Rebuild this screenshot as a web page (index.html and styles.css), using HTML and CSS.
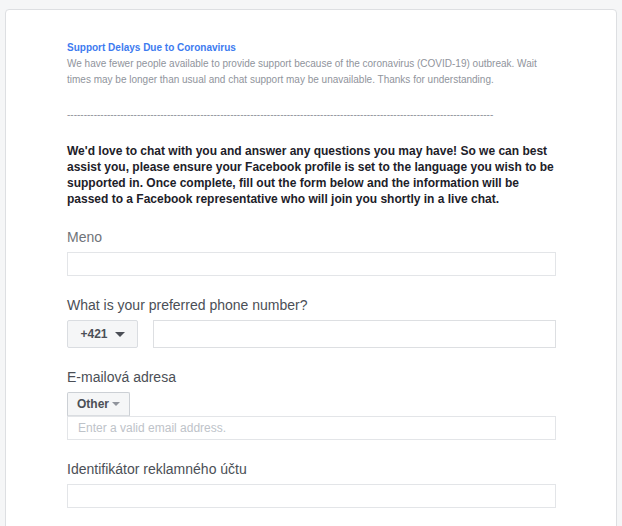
FILE: index.html
```html
<!DOCTYPE html>
<html lang="en">
<head>
<meta charset="utf-8">
<title>Support</title>
<link rel="stylesheet" href="styles.css">
</head>
<body>
<div class="card">
  <div class="notice">
    <div class="notice-title">Support Delays Due to Coronavirus</div>
    <div class="notice-text">We have fewer people available to provide support because of the coronavirus (COVID-19) outbreak. Wait times may be longer than usual and chat support may be unavailable. Thanks for understanding.</div>
  </div>
  <div class="dashes">--------------------------------------------------------------------------------------------------------------------------------</div>
  <p class="intro">We'd love to chat with you and answer any questions you may have! So we can best assist you, please ensure your Facebook profile is set to the language you wish to be supported in. Once complete, fill out the form below and the information will be passed to a Facebook representative who will join you shortly in a live chat.</p>

  <div class="field">
    <label class="label label-light">Meno</label>
    <div class="input"></div>
  </div>

  <div class="field">
    <label class="label">What is your preferred phone number?</label>
    <div class="phone-row">
      <div class="country-btn"><span>+421</span><i class="caret caret-dark"></i></div>
      <div class="input input-tall"></div>
    </div>
  </div>

  <div class="field">
    <label class="label">E-mailová adresa</label>
    <div class="email-block">
      <div class="type-btn"><span>Other</span><i class="caret caret-light"></i></div>
      <div class="input"><span class="placeholder">Enter a valid email address.</span></div>
    </div>
  </div>

  <div class="field">
    <label class="label">Identifikátor reklamného účtu</label>
    <div class="input"></div>
  </div>
</div>
</body>
</html>
```

FILE: styles.css
```css
html, body {
  margin: 0;
  padding: 0;
  overflow: hidden;
}
body {
  background: #f5f6f7;
  font-family: "Liberation Sans", Arial, sans-serif;
  padding-top: 9px;
  padding-left: 5px;
}
.card {
  box-sizing: border-box;
  width: 612px;
  min-height: 560px;
  background: #fff;
  border: 1px solid #dddfe2;
  border-radius: 4px;
  padding: 30px 60px 40px 61px;
}
.notice-title {
  font-size: 10px;
  line-height: 16px;
  font-weight: bold;
  color: #3d7bf0;
}
.notice-text {
  font-size: 10px;
  line-height: 16px;
  color: #90949c;
}
.dashes {
  margin-top: 19px;
  white-space: nowrap;
  font-size: 10px;
  line-height: 16px;
  color: #90949c;
}
.intro {
  margin: 20px 0 0;
  font-size: 12px;
  line-height: 16px;
  font-weight: bold;
  color: #1d2129;
}
.field {
  margin-top: 20px;
  display: flex;
  flex-direction: column;
}
.intro + .field {
  margin-top: 21px;
}
.label {
  font-size: 14px;
  line-height: 18px;
  color: #4b4f56;
  margin-bottom: 6px;
}
.label-light {
  color: #6f7379;
}
.input {
  box-sizing: border-box;
  height: 24px;
  border: 1px solid #e3e5e8;
  background: #fff;
  display: flex;
  align-items: center;
  padding: 0 10px;
}
.input-tall {
  height: 28px;
  flex: 1;
  border-color: #dddfe2;
}
.placeholder {
  font-size: 12px;
  color: #bec3c9;
}
.phone-row {
  display: flex;
  gap: 15px;
}
.country-btn {
  box-sizing: border-box;
  width: 71px;
  height: 28px;
  background: #f5f6f7;
  border: 1px solid #dadde1;
  border-radius: 2px;
  display: flex;
  align-items: center;
  justify-content: center;
  gap: 7px;
  font-size: 12px;
  font-weight: bold;
  color: #4b4f56;
}
.email-block {
  display: flex;
  flex-direction: column;
  align-items: flex-start;
}
.email-block .input {
  align-self: stretch;
}
.type-btn {
  box-sizing: border-box;
  height: 24px;
  background: #f5f6f7;
  border: 1px solid #ccd0d5;
  border-bottom-color: #dadde1;
  border-radius: 2px 2px 0 0;
  display: flex;
  align-items: center;
  gap: 3px;
  padding: 0 9px 0 9px;
  font-size: 12px;
  font-weight: bold;
  color: #4b4f56;
}
.caret {
  display: block;
  width: 0;
  height: 0;
}
.caret-dark {
  border-left: 5px solid transparent;
  border-right: 5px solid transparent;
  border-top: 5px solid #4b4f56;
}
.caret-light {
  border-left: 4px solid transparent;
  border-right: 4px solid transparent;
  border-top: 4px solid #90949c;
}
```
